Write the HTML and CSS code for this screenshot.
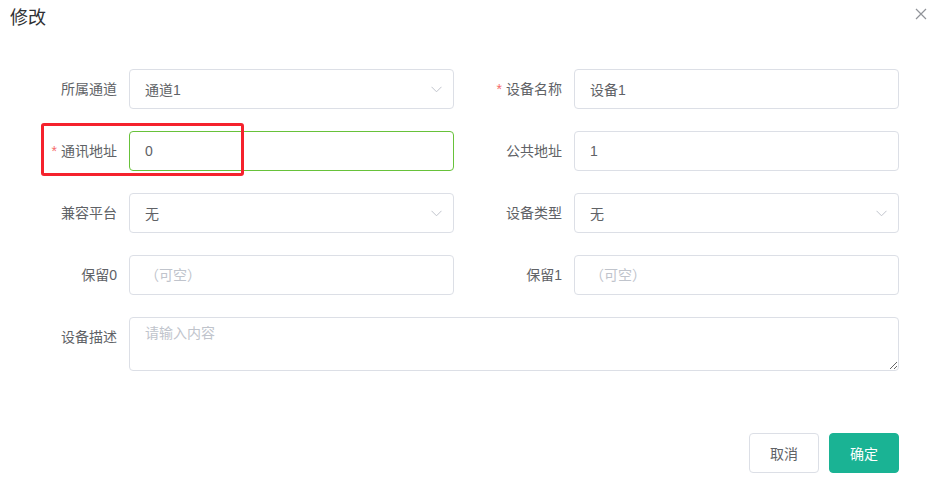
FILE: index.html
```html
<!DOCTYPE html>
<html lang="zh-CN">
<head>
  <meta charset="UTF-8">
  <meta name="viewport" content="width=device-width, initial-scale=1.0">
  <title>修改</title>
  <link rel="stylesheet" href="styles.css">
</head>
<body>
  <div class="dialog">
    <div class="dialog-header">
      <span class="dialog-title">修改</span>
      <button class="dialog-close" aria-label="关闭">
        <svg width="12" height="12" viewBox="0 0 12 12"><path d="M1 1 L11 11 M11 1 L1 11" stroke="#909399" stroke-width="1.2" fill="none"/></svg>
      </button>
    </div>

    <form class="form">
      <div class="form-item">
        <label class="form-label">所属通道</label>
        <div class="select">
          <span>通道1</span>
          <svg width="11" height="7" viewBox="0 0 11 7"><path d="M0.5 0.8 L5.5 5.8 L10.5 0.8" stroke="#c0c4cc" stroke-width="1" fill="none"/></svg>
        </div>
      </div>
      <div class="form-item">
        <label class="form-label"><span class="required">*</span>设备名称</label>
        <input class="input" type="text" value="设备1">
      </div>

      <div class="form-item">
        <label class="form-label"><span class="required">*</span>通讯地址</label>
        <input class="input is-success" type="text" value="0">
      </div>
      <div class="form-item">
        <label class="form-label">公共地址</label>
        <input class="input" type="text" value="1">
      </div>

      <div class="form-item">
        <label class="form-label">兼容平台</label>
        <div class="select">
          <span>无</span>
          <svg width="11" height="7" viewBox="0 0 11 7"><path d="M0.5 0.8 L5.5 5.8 L10.5 0.8" stroke="#c0c4cc" stroke-width="1" fill="none"/></svg>
        </div>
      </div>
      <div class="form-item">
        <label class="form-label">设备类型</label>
        <div class="select">
          <span>无</span>
          <svg width="11" height="7" viewBox="0 0 11 7"><path d="M0.5 0.8 L5.5 5.8 L10.5 0.8" stroke="#c0c4cc" stroke-width="1" fill="none"/></svg>
        </div>
      </div>

      <div class="form-item">
        <label class="form-label">保留0</label>
        <input class="input" type="text" placeholder="（可空）">
      </div>
      <div class="form-item">
        <label class="form-label">保留1</label>
        <input class="input" type="text" placeholder="（可空）">
      </div>

      <div class="form-item wide">
        <label class="form-label">设备描述</label>
        <textarea class="textarea" placeholder="请输入内容"></textarea>
      </div>
    </form>

    <div class="dialog-footer">
      <button class="btn">取消</button>
      <button class="btn btn-primary">确定</button>
    </div>

    <!-- annotation box -->
    <div class="highlight"></div>
  </div>
</body>
</html>
```

FILE: styles.css
```css
/* General */
body {
  margin: 0;
  padding: 0;
  font-family: 'Liberation Sans', 'Noto Sans CJK SC', sans-serif;
  background: #ffffff;
  color: #606266;
  font-size: 14px;
}

.dialog {
  position: relative;
  width: 929px;
  height: 486px;
  background: #fff;
}

/* Header */
.dialog-header {
  display: flex;
  justify-content: space-between;
  align-items: flex-start;
  padding: 6px 2px 0 10px;
  height: 24px;
}

.dialog-title {
  font-size: 18px;
  line-height: 24px;
  color: #303133;
}

.dialog-close {
  border: none;
  background: none;
  padding: 0;
  margin-top: 2px;
  width: 12px;
  height: 12px;
  cursor: pointer;
}

/* Form */
.form {
  display: grid;
  grid-template-columns: 425px 425px;
  column-gap: 20px;
  row-gap: 22px;
  padding: 39px 30px 0 29px;
  margin: 0;
}

.form-item {
  display: flex;
  align-items: flex-start;
}

.form-item.wide {
  grid-column: 1 / 3;
}

.form-label {
  width: 100px;
  flex-shrink: 0;
  box-sizing: border-box;
  padding-right: 12px;
  text-align: right;
  line-height: 40px;
  color: #606266;
}

.required {
  color: #f56c6c;
  margin-right: 4px;
}

.input, .select, .textarea {
  flex: 1;
  box-sizing: border-box;
  border: 1px solid #dcdfe6;
  border-radius: 4px;
  font-family: inherit;
  font-size: 14px;
  color: #606266;
  background: #fff;
  outline: none;
}

.input {
  height: 40px;
  padding: 0 15px;
}

.input.is-success {
  border-color: #67c23a;
}

.input::placeholder, .textarea::placeholder {
  color: #c0c4cc;
}

.select {
  height: 40px;
  display: flex;
  align-items: center;
  justify-content: space-between;
  padding: 0 11px 0 15px;
}

.textarea {
  height: 54px;
  padding: 5px 15px;
  line-height: 1.5;
  resize: vertical;
}

/* Footer */
.dialog-footer {
  display: flex;
  justify-content: flex-end;
  gap: 10px;
  padding: 62px 30px 0 0;
}

.btn {
  height: 40px;
  width: 70px;
  padding: 0;
  border: 1px solid #dcdfe6;
  border-radius: 4px;
  background: #fff;
  color: #606266;
  font-family: inherit;
  font-size: 14px;
  cursor: pointer;
}

.btn-primary {
  background: #1ab394;
  border-color: #1ab394;
  color: #fff;
}

/* red annotation */
.highlight {
  position: absolute;
  left: 41px;
  top: 123px;
  width: 197px;
  height: 47px;
  border: 3px solid #f5222d;
  border-radius: 3px;
}
```
